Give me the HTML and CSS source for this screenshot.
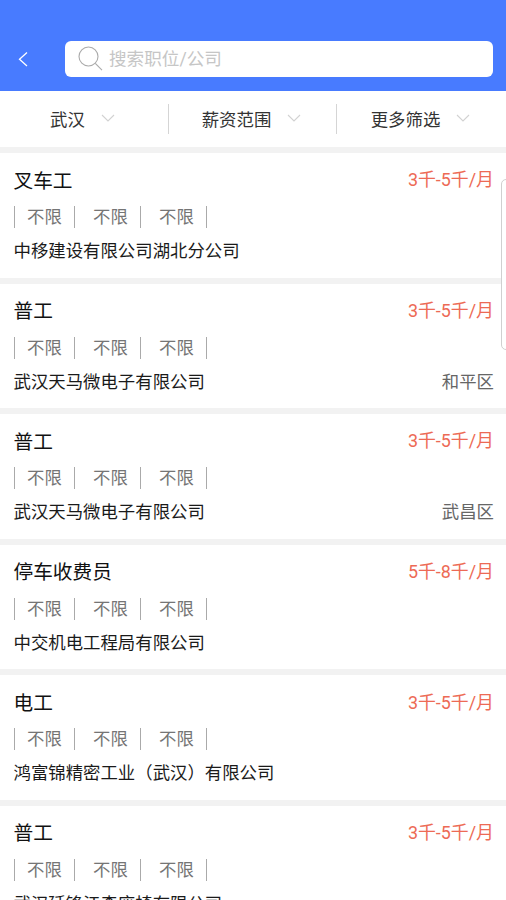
FILE: index.html
```html
<!DOCTYPE html>
<html lang="zh-CN">
<head>
<meta charset="utf-8">
<title>职位搜索</title>
<link rel="stylesheet" href="styles.css">
</head>
<body>
<header class="header">
  <svg class="back" width="12" height="18" viewBox="0 0 12 18"><path d="M11 2.5 3.5 9.2l7.5 6.7"/></svg>
  <div class="search">
    <svg class="search-icon" width="26" height="26" viewBox="0 0 26 26"><circle cx="10.5" cy="10.5" r="9.5"/><path d="m17.3 17.3 6.7 6.8"/></svg>
    <span>搜索职位/公司</span>
  </div>
</header>
<nav class="filters">
  <div class="filter"><span>武汉</span><svg class="arrow" width="14" height="9" viewBox="0 0 14 9"><path d="m1 1 6 6 6-6"/></svg></div>
  <div class="filter"><span>薪资范围</span><svg class="arrow" width="14" height="9" viewBox="0 0 14 9"><path d="m1 1 6 6 6-6"/></svg></div>
  <div class="filter"><span>更多筛选</span><svg class="arrow" width="14" height="9" viewBox="0 0 14 9"><path d="m1 1 6 6 6-6"/></svg></div>
</nav>
<main class="jobs">
  <article class="job">
    <div class="row top"><h2>叉车工</h2><span class="salary">3千-5千/月</span></div>
    <div class="tags"><span>不限</span><span>不限</span><span>不限</span></div>
    <div class="row company"><span>中移建设有限公司湖北分公司</span></div>
  </article>
  <article class="job">
    <div class="row top"><h2>普工</h2><span class="salary">3千-5千/月</span></div>
    <div class="tags"><span>不限</span><span>不限</span><span>不限</span></div>
    <div class="row company"><span>武汉天马微电子有限公司</span><span class="area">和平区</span></div>
  </article>
  <article class="job">
    <div class="row top"><h2>普工</h2><span class="salary">3千-5千/月</span></div>
    <div class="tags"><span>不限</span><span>不限</span><span>不限</span></div>
    <div class="row company"><span>武汉天马微电子有限公司</span><span class="area">武昌区</span></div>
  </article>
  <article class="job">
    <div class="row top"><h2>停车收费员</h2><span class="salary">5千-8千/月</span></div>
    <div class="tags"><span>不限</span><span>不限</span><span>不限</span></div>
    <div class="row company"><span>中交机电工程局有限公司</span></div>
  </article>
  <article class="job">
    <div class="row top"><h2>电工</h2><span class="salary">3千-5千/月</span></div>
    <div class="tags"><span>不限</span><span>不限</span><span>不限</span></div>
    <div class="row company"><span>鸿富锦精密工业（武汉）有限公司</span></div>
  </article>
  <article class="job">
    <div class="row top"><h2>普工</h2><span class="salary">3千-5千/月</span></div>
    <div class="tags"><span>不限</span><span>不限</span><span>不限</span></div>
    <div class="row company"><span>武汉延锋江森座椅有限公司</span></div>
  </article>
</main>
<div class="edge-handle"></div>
</body>
</html>
```
FILE: styles.css
```css
* { box-sizing: border-box; }
body {
  margin: 0;
  height: 900px;
  overflow: hidden;
  position: relative;
  background: #fff;
  color: #222;
  font-family: Roboto, "Noto Sans CJK SC", sans-serif;
  font-size: 17.4px;
}
svg { fill: none; flex: none; }
.header {
  height: 91px;
  padding: 41px 13px 14px 16px;
  display: flex;
  align-items: center;
  background: #487bff;
}
.back { stroke: #fff; stroke-width: 1.3; margin-right: 37px; }
.search {
  flex: 1;
  height: 36px;
  padding-left: 13px;
  display: flex;
  align-items: center;
  background: #fff;
  border-radius: 6px;
  color: #c6c6c6;
  font-size: 17.6px;
}
.search span { padding-bottom: 3px; }
.search-icon { stroke: #aaa; stroke-width: 1.1; margin-right: 5px; }
.filters {
  height: 56px;
  display: grid;
  grid-template-columns: 168px 168px 1fr;
  align-items: center;
  color: #333;
}
.filter {
  height: 30px;
  display: flex;
  align-items: center;
  justify-content: center;
  padding-right: 3px;
}
.filter span { padding-bottom: 2px; }
.filter + .filter { border-left: 1px solid #d5d5d5; padding-right: 2px; }
.arrow { stroke: #d2d2d2; stroke-width: 1.1; margin: 0 0 1px 16px; }
.job {
  height: 130.6px;
  padding: 11px 12px 0 13.5px;
  border-top: 6px solid #f2f2f2;
}
.row { display: flex; justify-content: space-between; align-items: center; }
.top { height: 30px; }
h2 { margin: 0; font-size: 19.7px; font-weight: 400; color: #111; }
.salary { font-size: 17.9px; color: #ed6a55; padding-bottom: 1.6px; }
.tags { height: 22px; margin-top: 12px; display: flex; color: #757575; }
.tags span {
  width: 66px;
  line-height: 22px;
  padding-left: 18.5px;
  border-right: 1px solid #aaa;
}
.tags span:first-child { width: 61px; padding-left: 12.5px; border-left: 1px solid #aaa; }
.company { height: 26px; margin-top: 8.6px; color: #1a1a1a; }
.area { color: #666; }
.edge-handle {
  position: absolute;
  top: 179px;
  right: -3px;
  width: 8px;
  height: 171px;
  background: #fff;
  border: 1px solid #d0d0d0;
  border-radius: 5px 0 0 5px;
}
```
